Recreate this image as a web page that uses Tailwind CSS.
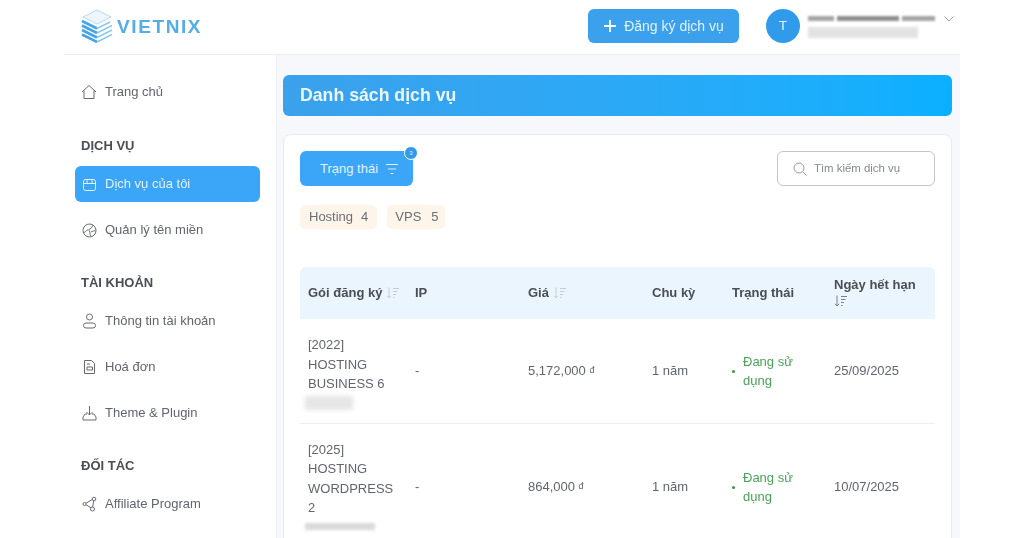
<!DOCTYPE html>
<html lang="vi">
<head>
<meta charset="utf-8">
<script src="https://cdn.jsdelivr.net/npm/@tailwindcss/browser@4"></script>
</head>
<body class="bg-white font-['Liberation_Sans',sans-serif] text-[13px] text-[#60656e] overflow-hidden h-[538px]">
<div class="mx-16 w-[896px] h-[538px] flex flex-col overflow-hidden blur-[0.35px]">
  <header class="h-[55px] shrink-0 border-b border-[#e9ebee] flex items-center pl-[17px] pr-[6px]">
    <svg width="32" height="34" viewBox="0 0 32 34" fill="none" class="shrink-0 mb-[3px]">
      <path d="M16 1 30 8 16 15 2 8Z" fill="#eef6fc" stroke="#b5d9f1" stroke-width="1"/>
      <path d="M1 12 16 19.500M1 16.500 16 24M1 21 16 28.500M1 25.500 16 33" stroke="#45a4e6" stroke-width="2.600"/>
      <path d="M16 19.500 29 13M16 24 31 16.500M16 28.500 31 21M16 33 31 25.500" stroke="#8cc7ef" stroke-width="1.400"/>
    </svg>
    <span class="ml-[4px] mb-[2px] text-[19px] leading-none font-bold tracking-[1.600px] text-[#55ade6]">VIETNIX</span>
    <div class="ml-auto flex items-center mb-[2px]">
      <button class="w-[151px] h-[34px] rounded-[6px] bg-[#3ba1ec] text-white/85 flex items-center justify-center gap-[7px] text-[14px] mr-[27px]">
        <svg width="14" height="14" viewBox="0 0 14 14" fill="none" stroke="white" stroke-width="1.800"><path d="M7 1v12M1 7h12"/></svg>
        Đăng ký dịch vụ
      </button>
      <div class="w-[34px] h-[34px] rounded-full bg-[#2f9bea] text-white/90 flex items-center justify-center text-[13px] mr-[8px]">T</div>
      <div class="w-[136px] flex flex-col gap-[6px] mt-[2px]">
        <div class="flex gap-[3px] w-[127px] h-[5px] blur-[1.200px]">
          <div class="w-[26px] bg-[#a5a5a5]"></div>
          <div class="w-[62px] bg-[#8f8f8f]"></div>
          <div class="w-[33px] bg-[#a5a5a5]"></div>
        </div>
        <div class="w-[110px] h-[11px] bg-[#e2e2e2] blur-[1.500px]"></div>
      </div>
      <svg width="10" height="6" viewBox="0 0 10 6" fill="none" stroke="#9a9da3" stroke-width="1" class="mb-[15px]"><path d="m.5.5 4.500 4.500L9.500.5"/></svg>
    </div>
  </header>
  <div class="flex flex-1 min-h-0">
    <aside class="w-[213px] shrink-0 border-r border-[#eceef1] pl-[11px] pr-[16px] pt-[19px] flex flex-col">
      <a class="h-[36px] pl-[6px] flex items-center gap-[8px]">
        <svg width="16" height="16" viewBox="0 0 16 16" fill="none" stroke="#666b73" stroke-width="1"><path d="M1 8 8 1.500 15 8M3 6.500V14.500H13V6.500"/></svg>
        Trang chủ
      </a>
      <h3 class="mt-[26px] ml-[6px] font-bold text-[#4a4e55] leading-[20px]">DỊCH VỤ</h3>
      <a class="mt-[10px] h-[36px] rounded-[6px] bg-[#3ba5f8] text-white/85 pl-[7px] flex items-center gap-[8px]">
        <svg width="15" height="15" viewBox="0 0 15 15" fill="none" stroke="white" stroke-opacity=".85" stroke-width="1"><rect x="1.500" y="2.500" width="12" height="11" rx="2"/><path d="M1.500 6.500h12M5 2.500v4M10 2.500v4"/></svg>
        Dịch vụ của tôi
      </a>
      <a class="mt-[10px] h-[36px] pl-[7px] flex items-center gap-[8px]">
        <svg width="15" height="15" viewBox="0 0 15 15" fill="none" stroke="#666b73" stroke-width="1"><circle cx="7.500" cy="7.500" r="6.500"/><path d="M2 9.500c2-.5 2.500-3 4.500-2.500s1 4 2 6M7 6.500c1.500-1 3-1 3.500-4M9 9c1.500-1 3-1 4.500-1.500"/></svg>
        Quản lý tên miền
      </a>
      <h3 class="mt-[25px] ml-[6px] font-bold text-[#4a4e55] leading-[20px]">TÀI KHOẢN</h3>
      <a class="mt-[10px] h-[36px] pl-[7px] flex items-center gap-[8px]">
        <svg width="15" height="16" viewBox="0 0 15 16" fill="none" stroke="#666b73" stroke-width="1"><circle cx="7.500" cy="4" r="3"/><rect x="1.500" y="10" width="12" height="5" rx="2.500"/></svg>
        Thông tin tài khoản
      </a>
      <a class="mt-[10px] h-[36px] pl-[7px] flex items-center gap-[8px]">
        <svg width="15" height="16" viewBox="0 0 15 16" fill="none" stroke="#666b73" stroke-width="1"><path d="M2.500 1.500h7l3 3v10h-10ZM5 5h3M5 8h5.500v3H5Z"/></svg>
        Hoá đơn
      </a>
      <a class="mt-[10px] h-[36px] pl-[7px] flex items-center gap-[8px]">
        <svg width="15" height="16" viewBox="0 0 15 16" fill="none" stroke="#666b73" stroke-width="1"><path d="M7.500 1v9M4.500 7l3 3 3-3M5 9H3l-2 3v3h13v-3l-2-3h-2"/></svg>
        Theme &amp; Plugin
      </a>
      <h3 class="mt-[25px] ml-[6px] font-bold text-[#4a4e55] leading-[20px]">ĐỐI TÁC</h3>
      <a class="mt-[10px] h-[36px] pl-[7px] flex items-center gap-[8px]">
        <svg width="15" height="16" viewBox="0 0 15 16" fill="none" stroke="#666b73" stroke-width="1"><circle cx="2.500" cy="8" r="1.500"/><circle cx="12" cy="3" r="1.800"/><circle cx="10.500" cy="13" r="2"/><path d="M4 7.200 10.300 3.500M4 8.800l5 3M11.700 4.800l-1 6.200"/></svg>
        Affiliate Program
      </a>
    </aside>
    <main class="flex-1 min-w-0 bg-[#f7f8fb] pl-[6px] pr-[8px] pt-[20px]">
      <div class="h-[41px] rounded-[6px] bg-gradient-to-r from-[#3ba1ec] to-[#09b0ff] flex items-center px-[17px] text-white/90 font-bold text-[17.700px]">Danh sách dịch vụ</div>
      <section class="mt-[18px] bg-white border border-[#e8eaed] rounded-[8px] pt-[16px] px-[16px] h-[420px]">
        <div class="flex items-start justify-between">
          <button class="relative w-[113px] h-[35px] rounded-[6px] bg-[#3ba5f8] text-white/85 flex items-center pl-[20px] gap-[8px]">
            Trạng thái
            <svg width="12" height="12" viewBox="0 0 12 12" fill="none" stroke="white" stroke-opacity=".85" stroke-width="1.100"><path d="M0 1.500h12M2 6h8M4.500 10.500h3"/></svg>
            <span class="absolute -right-[5px] -top-[5px] w-[14px] h-[14px] rounded-full bg-[#2f9bea] border border-white text-[6px] leading-[12px] text-white/80 text-center">3</span>
          </button>
          <div class="w-[158px] h-[35px] rounded-[6px] border border-[#c4c6ca] flex items-center pl-[15px] gap-[7px] text-[11.400px] text-[#85888e]">
            <svg width="14" height="14" viewBox="0 0 14 14" fill="none" stroke="#9a9da3" stroke-width="1"><circle cx="6" cy="6" r="5"/><path d="m9.700 9.700 3.800 3.800"/></svg>
            Tìm kiếm dịch vụ
          </div>
        </div>
        <div class="mt-[19px] flex gap-[10px] text-[#6b6e74]">
          <span class="h-[24px] rounded-[5px] bg-[#fdf5ea] px-[9px] flex items-center gap-[8px]"><span>Hosting</span><span>4</span></span>
          <span class="h-[24px] rounded-[5px] bg-[#fdf5ea] pl-[8px] pr-[6px] flex items-center gap-[10px]"><span>VPS</span><span>5</span></span>
        </div>
        <div class="mt-[38px]">
          <div class="grid grid-cols-[107px_113px_124px_80px_102px_109px] h-[52px] items-center bg-[#eaf5fe] rounded-t-[6px] font-bold text-[#4a4e55]">
            <div class="pl-[8px] flex items-center gap-[4px]">Gói đăng ký
              <svg width="14" height="12" viewBox="0 0 14 12" fill="none" stroke="#c9cdd2" stroke-width="1"><path d="M3 .5v10.500M.8 8.800 3 11l2.200-2.200M7 1.500h6M7 4.500h4.500M7 7.500h3M7 10.500h1.500"/></svg>
            </div>
            <div class="pl-[8px]">IP</div>
            <div class="pl-[8px] flex items-center gap-[4px]">Giá
              <svg width="14" height="12" viewBox="0 0 14 12" fill="none" stroke="#c9cdd2" stroke-width="1"><path d="M3 .5v10.500M.8 8.800 3 11l2.200-2.200M7 1.500h6M7 4.500h4.500M7 7.500h3M7 10.500h1.500"/></svg>
            </div>
            <div class="pl-[8px]">Chu kỳ</div>
            <div class="pl-[8px]">Trạng thái</div>
            <div class="pl-[8px] leading-[16px] mb-[3px]">Ngày hết hạn
              <svg width="14" height="12" viewBox="0 0 14 12" fill="none" stroke="#7c8087" stroke-width="1" class="block mt-[2px]"><path d="M3 .5v10.500M.8 8.800 3 11l2.200-2.200M7 1.500h6M7 4.500h4.500M7 7.500h3M7 10.500h1.500"/></svg>
            </div>
          </div>
          <div class="grid grid-cols-[107px_113px_124px_80px_102px_109px] h-[105px] items-center border-b border-[#eceef1] leading-[19.500px]">
            <div class="pl-[8px] pr-[8px]">[2022] HOSTING BUSINESS 6<div class="-ml-[3px] mt-[2px] -mb-[3px] w-[48px] h-[14px] bg-[#e6e6e6] blur-[2px]"></div></div>
            <div class="pl-[8px]">-</div>
            <div class="pl-[8px]">5,172,000 <span class="text-[9px] leading-none align-[2px]">đ</span></div>
            <div class="pl-[8px]">1 năm</div>
            <div class="pl-[8px] flex items-center gap-[8px] text-[#4aa257]"><span class="w-[3px] h-[3px] rounded-full bg-[#3b9148] shrink-0"></span><span class="w-[66px]">Đang sử dụng</span></div>
            <div class="pl-[8px]">25/09/2025</div>
          </div>
          <div class="grid grid-cols-[107px_113px_124px_80px_102px_109px] h-[126px] items-center leading-[19.500px]">
            <div class="pl-[8px] pr-[8px]">[2025] HOSTING WORDPRESS 2<div class="-ml-[3px] my-[5px] w-[70px] h-[7px] bg-[#d9d9d9] blur-[1.500px]"></div></div>
            <div class="pl-[8px]">-</div>
            <div class="pl-[8px]">864,000 <span class="text-[9px] leading-none align-[2px]">đ</span></div>
            <div class="pl-[8px]">1 năm</div>
            <div class="pl-[8px] flex items-center gap-[8px] text-[#4aa257]"><span class="w-[3px] h-[3px] rounded-full bg-[#3b9148] shrink-0"></span><span class="w-[66px]">Đang sử dụng</span></div>
            <div class="pl-[8px]">10/07/2025</div>
          </div>
        </div>
      </section>
    </main>
  </div>
</div>
</body>
</html>
